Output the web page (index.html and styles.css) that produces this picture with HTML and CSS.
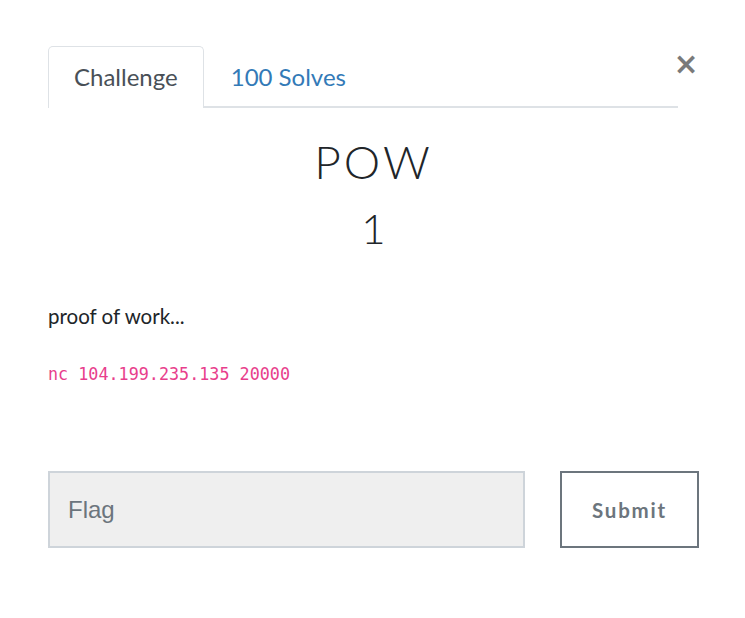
FILE: index.html
```html
<!DOCTYPE html>
<html>
<head>
<meta charset="utf-8">
<link rel="stylesheet" href="styles.css">
</head>
<body>
<div class="modal">
  <div class="header">
    <ul class="tabs">
      <li class="tab active">Challenge</li>
      <li class="tab link">100 Solves</li>
    </ul>
    <button class="close" aria-label="Close">&times;</button>
  </div>
  <h2 class="name">POW</h2>
  <h3 class="value">1</h3>
  <p class="desc">proof of work...</p>
  <p class="code"><code>nc 104.199.235.135 20000</code></p>
  <div class="form">
    <input class="flag" type="text" placeholder="Flag">
    <button class="submit">Submit</button>
  </div>
</div>
</body>
</html>
```

FILE: styles.css
```css
html, body {
  margin: 0;
  padding: 0;
  background: #fff;
}
body {
  font-family: Lato, "Noto Sans", sans-serif;
  color: #212529;
}
.modal {
  width: 651px;
  padding: 46px 0 0 48px;
}
.header {
  display: flex;
  align-items: flex-start;
}
.tabs {
  list-style: none;
  margin: 0;
  padding: 0;
  display: flex;
  flex-shrink: 0;
  width: 630px;
  border-bottom: 2px solid #dee2e6;
}
.tab {
  font-size: 24px;
  line-height: 30px;
  padding: 15px 25px 14px;
  border: 1px solid transparent;
  border-bottom: none;
  border-radius: 5px 5px 0 0;
  margin-bottom: -2px;
}
.tab.active {
  color: #495057;
  border-color: #dee2e6;
  background: #fff;
  padding-bottom: 16px;
}
.tab.link {
  color: #337ab7;
  padding-left: 26px;
}
.close {
  flex: none;
  margin-left: auto;
  margin-right: 5px;
  background: none;
  border: none;
  padding: 0;
  width: 16px;
  font-family: "DejaVu Sans", sans-serif;
  font-size: 30px;
  font-weight: bold;
  line-height: 1;
  color: #7a7a7a;
  margin-top: 3px;
  display: flex;
  justify-content: center;
}
.name {
  margin: 27px 0 0;
  text-align: center;
  font-family: Lato, sans-serif;
  font-weight: 300;
  font-size: 46px;
  line-height: 54px;
  color: #212529;
  letter-spacing: 3px;
}
.value {
  margin: 15px 0 0;
  text-align: center;
  font-weight: 300;
  font-size: 42px;
  line-height: 48px;
  color: #212529;
}
.desc {
  margin: 50px 0 0;
  font-size: 20.5px;
  line-height: 28px;
  color: #212529;
}
.code {
  margin: 32px 0 0;
  line-height: 24px;
}
.code code {
  font-family: "DejaVu Sans Mono", monospace;
  font-size: 16.75px;
  color: #e83e8c;
}
.form {
  display: flex;
  justify-content: space-between;
  margin-top: 85px;
}
.flag {
  box-sizing: border-box;
  width: 477px;
  height: 77px;
  border: 2px solid #ced4da;
  background: #efefef;
  padding: 0 18px;
  font-family: "Liberation Sans", Arial, sans-serif;
  font-size: 24px;
  color: #495057;
  outline: none;
  border-radius: 0;
}
.flag::placeholder {
  color: #6c757d;
}
.submit {
  box-sizing: border-box;
  width: 139px;
  height: 77px;
  border: 2px solid #6c757d;
  background: #fff;
  color: #6c757d;
  font-family: Lato, sans-serif;
  font-weight: bold;
  font-size: 20.5px;
  letter-spacing: 1.8px;
  border-radius: 0;
}
```
